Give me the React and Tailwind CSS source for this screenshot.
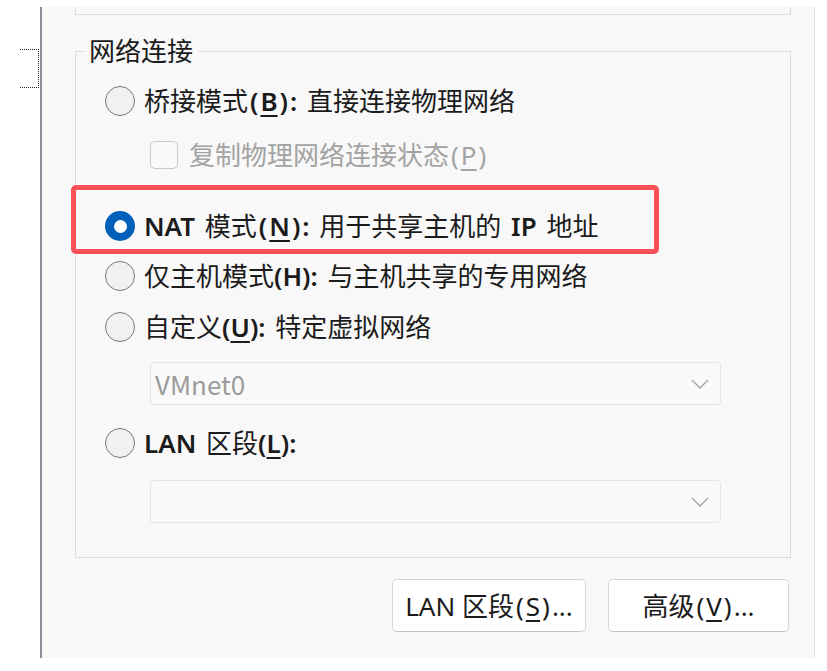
import React from "react";

function Radio({ checked }) {
  if (checked) {
    return (
      <div className="w-[30px] h-[30px] rounded-full bg-[#005fb8] flex items-center justify-center shrink-0">
        <div className="w-[13px] h-[13px] rounded-full bg-white" />
      </div>
    );
  }
  return <div className="w-[30px] h-[30px] rounded-full border-[1.5px] border-[#777777] bg-[#f1f1f1] shrink-0" />;
}

function L({ children }) {
  return <span className="font-semibold">{children}</span>;
}

function U({ children }) {
  return <span className="underline underline-offset-[4px] decoration-[1.5px]">{children}</span>;
}

function Po({ tight }) {
  return <span className={tight ? "" : "pl-[2px] pr-[2px]"}>(</span>;
}

function Pc({ tight }) {
  return <span className={tight ? "" : "pl-[2px] pr-[2px]"}>)</span>;
}

function Chevron() {
  return (
    <svg width="18" height="10" viewBox="0 0 18 10" className="shrink-0">
      <polyline points="1,1 9,9 17,1" fill="none" stroke="#a3a3a3" strokeWidth="1.3" />
    </svg>
  );
}

function Select({ value }) {
  return (
    <div className="ml-[74px] w-[571px] h-[43px] rounded-[4px] border border-[#e4e4e4] bg-[#f9f9f9] flex items-center justify-between pl-[4px] pr-[11px]">
      <span className="text-[26px] leading-none text-[#9c9c9c] font-['Noto_Sans_CJK_SC',sans-serif]">{value}</span>
      <Chevron />
    </div>
  );
}

export default function App() {
  return (
    <div className="w-[827px] h-[671px] bg-white flex font-['Noto_Sans','Noto_Sans_CJK_SC',sans-serif] text-[#1b1b1b] overflow-hidden">
      <div className="w-[40px] shrink-0">
        <div className="ml-[20px] mt-[49px] w-[19px] h-[39px] border-t border-r border-b border-dotted border-[#222]" />
      </div>
      <div className="mt-[7px] w-[775px] h-[651px] border-l-2 border-l-[#8b9099] border-r border-r-[#e2e2e2] bg-[#f8f8f8] pl-[33px] relative">
        <div className="w-[716px] h-[8px] border-l border-r border-b border-[#dcdcdc]" />
        <fieldset className="mt-[22px] w-[716px] h-[521px] border border-[#dcdcdc] m-0 p-0 min-w-0">
          <legend className="ml-[8px] px-[5px] text-[26px] leading-[28px] text-[#1b1b1b]">网络连接</legend>

          <div className="mt-[16px] pl-[29px] h-[40px] flex items-center gap-[9px] text-[26px] leading-none [word-spacing:3px]">
            <Radio />
            <span>桥接模式<L><Po /><U>B</U><Pc />:</L> 直接连接物理网络</span>
          </div>

          <div className="mt-[14px] pl-[74px] h-[40px] flex items-center gap-[11px] text-[26px] leading-none">
            <div className="w-[28px] h-[28px] rounded-[5px] border border-[#c9c9c9] bg-[#f9f9f9] shrink-0" />
            <span className="text-[#a3a3a3]">复制物理网络连接状态<Po /><U>P</U><Pc /></span>
          </div>

          <div className="mt-[31px] pl-[29px] h-[40px] flex items-center gap-[9px] text-[26px] leading-none [word-spacing:3px]">
            <Radio checked />
            <span><L>NAT</L> 模式<L><Po /><U>N</U><Pc />:</L> 用于共享主机的 <L>IP</L> 地址</span>
          </div>

          <div className="mt-[10px] pl-[29px] h-[40px] flex items-center gap-[9px] text-[26px] leading-none [word-spacing:3px]">
            <Radio />
            <span>仅主机模式<L><Po tight />H<Pc tight />:</L> 与主机共享的专用网络</span>
          </div>

          <div className="mt-[11px] pl-[29px] h-[40px] flex items-center gap-[9px] text-[26px] leading-none [word-spacing:3px]">
            <Radio />
            <span>自定义<L><Po tight /><U>U</U><Pc tight />:</L> 特定虚拟网络</span>
          </div>

          <div className="mt-[15px]">
            <Select value="VMnet0" />
          </div>

          <div className="mt-[18px] pl-[29px] h-[40px] flex items-center gap-[9px] text-[26px] leading-none [word-spacing:3px]">
            <Radio />
            <span><L>LAN</L> 区段<L><Po tight /><U>L</U><Pc tight />:</L></span>
          </div>

          <div className="mt-[17px]">
            <Select value="" />
          </div>
        </fieldset>

        <div className="mt-[21px] w-[716px] flex justify-end gap-[22px] pr-[2px]">
          <button className="w-[194px] h-[53px] rounded-[5px] bg-white border border-[#d6d6d6] border-b-[#c4c4c4] text-[26px] leading-none text-[#1b1b1b] flex items-center justify-center">
            <span>LAN 区段<Po /><U>S</U><Pc />...</span>
          </button>
          <button className="w-[181px] h-[53px] rounded-[5px] bg-white border border-[#d6d6d6] border-b-[#c4c4c4] text-[26px] leading-none text-[#1b1b1b] flex items-center justify-center">
            <span>高级<Po /><U>V</U><Pc />...</span>
          </button>
        </div>

        <div className="absolute left-[29px] top-[178px] w-[588px] h-[69px] border-[5px] border-[#fb5058] rounded-[5px] pointer-events-none" />
      </div>
    </div>
  );
}
